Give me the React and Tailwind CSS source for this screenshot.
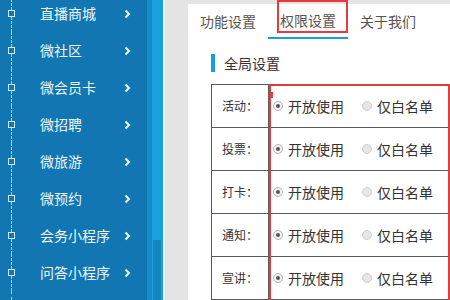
const menu = ["直播商城", "微社区", "微会员卡", "微招聘", "微旅游", "微预约", "会务小程序", "问答小程序"];
const rows = ["活动：", "投票：", "打卡：", "通知：", "宣讲："];
const tabs = ["功能设置", "权限设置", "关于我们"];

function Chevron() {
  return (
    <svg width="7" height="10" viewBox="0 0 7 10" className="shrink-0">
      <path d="M1.5 1.5 L5 5 L1.5 8.5" fill="none" stroke="currentColor" strokeWidth="2" />
    </svg>
  );
}

function Radio({ checked, label }) {
  return (
    <div className="flex items-center gap-[5px] shrink-0">
      {checked ? (
        <span className="w-[10px] h-[10px] rounded-full border border-[#b5b5b5] bg-[#f2f2f2] flex items-center justify-center">
          <span className="w-[4px] h-[4px] rounded-full bg-[#555]" />
        </span>
      ) : (
        <span className="w-[10px] h-[10px] rounded-full border border-[#cfcfcf] bg-[#e6e6e6]" />
      )}
      <span className="text-[14px] text-[#333] leading-none whitespace-nowrap">{label}</span>
    </div>
  );
}

export default function App() {
  return (
    <div
      className="relative flex w-[450px] h-[300px] overflow-hidden"
      style={{ fontFamily: '"Noto Sans CJK SC", "Noto Sans", sans-serif' }}
    >
      {/* sidebar */}
      <div className="w-[147px] shrink-0 h-full bg-[#1176b2] flex flex-col overflow-hidden">
        <div className="-mt-[5px] flex flex-col">
          {menu.map((m) => (
            <div key={m} className="flex items-center h-[37px] text-[#eef6fb]">
              <div className="w-[22px] h-full flex flex-col items-center">
                <div className="flex-1 border-l border-dashed border-[#9fcbe8]" />
                <div className="w-[7px] h-[7px] border border-[#d5e9f6]" />
                <div className="flex-1 border-l border-dashed border-[#9fcbe8]" />
              </div>
              <span className="ml-[18px] w-[84px] text-[14px] whitespace-nowrap">{m}</span>
              <Chevron />
            </div>
          ))}
        </div>
        <div className="flex-1 ml-[11px] border-l border-dashed border-[#9fcbe8]" />
      </div>

      {/* scroll strip */}
      <div className="flex h-full shrink-0">
        <div className="w-[5px] bg-[#168cc9]" />
        <div className="w-[11px] bg-[#19a2df] flex flex-col">
          <div className="h-[240px]" />
          <div className="ml-[1px] w-[8px] flex-1 bg-[#1386bd]" />
        </div>
        <div className="w-[2px] bg-[#eef3f7]" />
      </div>

      {/* main */}
      <div className="flex-1 min-w-0 h-full bg-[#e4e4e4] pt-[4px] pl-[23px] overflow-hidden">
        <div className="bg-white h-full">
          <div className="flex h-[35px]">
            {tabs.map((t, i) => (
              <div
                key={t}
                className={
                  i === 1
                    ? "w-[80px] shrink-0 flex items-center justify-center text-[14px] text-[#555] border-b-2 border-[#1a9ddd]"
                    : "w-[80px] shrink-0 flex items-center justify-center text-[14px] text-[#555]"
                }
              >
                {t}
              </div>
            ))}
          </div>

          <div className="mt-[14px] h-[20px] pl-[23px] flex items-center gap-[9px]">
            <div className="w-[4px] h-[18px] bg-[#1a9ddd]" />
            <span className="text-[14px] text-[#333] leading-[20px]">全局设置</span>
          </div>

          <div className="mt-[11px] ml-[23px] w-[260px] border-t border-l border-[#5a5a5a]">
            {rows.map((r) => (
              <div key={r} className="flex h-[43px] border-b border-[#5a5a5a]">
                <div className="w-[57px] shrink-0 border-r border-[#5a5a5a] flex items-center justify-center text-[12px] text-[#333]">
                  {r}
                </div>
                <div className="flex items-center pl-[4px] gap-[18px]">
                  <Radio checked label="开放使用" />
                  <Radio label="仅白名单" />
                </div>
              </div>
            ))}
            <div className="h-[43px]" />
          </div>
        </div>
      </div>

      {/* red annotation boxes */}
      <div className="absolute left-[277px] top-0 w-[71px] h-[33px] border-2 border-[#e63b3b]" />
      <div className="absolute left-[269px] top-[84px] w-[181px] h-[230px] border-2 border-[#e63b3b]" />
      <div className="absolute left-[270px] top-[92px] w-[3px] h-[6px] bg-[#e63b3b]" />
    </div>
  );
}
